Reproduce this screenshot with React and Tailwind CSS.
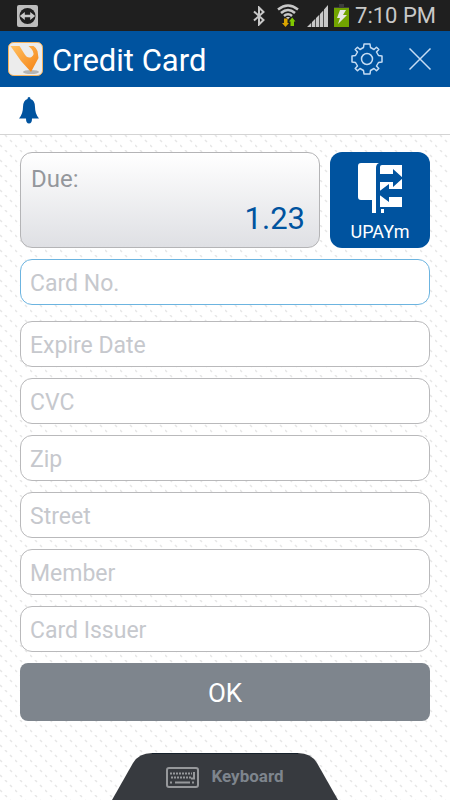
import React, { useState } from 'react';

const fields = [
  { id: 'cardNo', label: 'Card No.' },
  { id: 'expireDate', label: 'Expire Date' },
  { id: 'cvc', label: 'CVC' },
  { id: 'zip', label: 'Zip' },
  { id: 'street', label: 'Street' },
  { id: 'member', label: 'Member' },
  { id: 'cardIssuer', label: 'Card Issuer' },
];

function StatusBar() {
  return (
    <div className="flex h-[31px] items-center bg-[#1f1f1f] pl-[17px] pr-3.5 text-[#c8c8c8]">
      <svg className="h-[22px] w-[21px]" viewBox="0 0 21 22">
        <rect width="21" height="22" rx="2" fill="#bdbdbd" />
        <circle cx="10.5" cy="11" r="8" fill="#1f1f1f" />
        <path d="M2.8 11l5-4v2.7h5.4V7l5 4-5 4v-2.7H7.8V15z" fill="#c8c8c8" />
      </svg>
      <div className="ml-auto flex items-center">
        <svg className="h-5 w-3" viewBox="0 0 12 20" fill="none" stroke="#c8c8c8" strokeWidth="2">
          <path d="M1 5.5l9.5 8.5L6 18.5v-17L10.5 6 1 14.5" />
        </svg>
        <svg className="ml-3 h-[23px] w-[22px]" viewBox="0 0 22 23" fill="none">
          <g stroke="#c8c8c8" strokeWidth="2.5">
            <path d="M1 5.5Q11-2.5 21 5.5" />
            <path d="M4 9Q11 3 18 9" />
            <path d="M7 12Q11 8.500 15 12" />
          </g>
          <path d="M9 13h4l-2 2.500z" fill="#c8c8c8" />
          <path d="M7 14.500h3.500V19H12l-3.500 4L5 19h2z" fill="#d9a400" />
          <path d="M13.500 22H17v-4.500h1.500L15.200 13.500 12 17.500h1.500z" fill="#80c800" />
        </svg>
        <svg className="ml-2 h-[22px] w-[21px]" viewBox="0 0 21 22" fill="#c8c8c8">
          <path d="M0 22l4.300-4.300V22zM5 17l3.300-3.300V22H5zM9 13l3.300-3.300V22H9zM13 9l3.300-3.500V22H13zM17 4.500L21 0v22h-4z" />
        </svg>
        <svg className="ml-1.5 h-[23px] w-[15px]" viewBox="0 0 15 23">
          <path d="M5 0h5v3h5v3H0V3h5z" fill="#3c3c3c" />
          <path d="M0 4h15v19H0z" fill="#72a400" />
          <path d="M6 6h6l-3 5h4L4 20l2-6H3z" fill="#e6e6e6" />
        </svg>
        <span className="ml-1.5 text-[22px] leading-[31px]">7:10 PM</span>
      </div>
    </div>
  );
}

function AppLogo() {
  return (
    <svg className="h-[34px] w-[35px]" viewBox="0 0 35 34">
      <defs>
        <linearGradient id="logo" x1="0" y1="0" x2="1" y2="1">
          <stop offset="0" stopColor="#ffc061" />
          <stop offset="1" stopColor="#f58213" />
        </linearGradient>
      </defs>
      <rect x="0.5" y="0.5" width="34" height="33" rx="5" fill="#ececec" stroke="#f5b25c" />
      <ellipse cx="23" cy="30" rx="8" ry="2" fill="#b4b4b4" />
      <path d="M2.500 4h9l5 8q3 5 7 3 4-3 0-8l-3-3h5q3 2 4 5l1 7L23 30 13 19z" fill="url(#logo)" />
    </svg>
  );
}

function GearIcon() {
  return (
    <svg
      className="size-8"
      viewBox="0 0 32 32"
      fill="none"
      stroke="#c5dcf3"
      strokeWidth="1.5"
      strokeLinejoin="round"
    >
      <path d="M13 1H19L19.5 4.5 23 6.500 25.500 4.200 27.800 6.500 25.500 9 27.500 12.500 31 13V19L27.500 19.500 25.500 23 27.800 25.500 25.500 27.800 23 25.500 19.500 27.500 19 31H13L12.500 27.500 9 25.500 6.500 27.800 4.200 25.500 6.500 23 4.500 19.500 1 19V13L4.500 12.500 6.500 9 4.200 6.500 6.500 4.200 9 6.500 12.500 4.500Z" />
      <circle cx="16" cy="16" r="5.5" />
    </svg>
  );
}

function Header() {
  return (
    <header className="flex h-14 items-center bg-[#00539f] pl-2 pr-[18px] text-white">
      <AppLogo />
      <h1 className="ml-[9px] pt-1 text-[31px] leading-10">Credit Card</h1>
      <button type="button" aria-label="Settings" className="ml-auto">
        <GearIcon />
      </button>
      <button type="button" aria-label="Close" className="ml-[25px]">
        <svg className="size-6" viewBox="0 0 24 24" stroke="#c5dcf3" strokeWidth="1.5">
          <path d="M1.5 1.5l21 21M22.5 1.5l-21 21" />
        </svg>
      </button>
    </header>
  );
}

function UpayIcon() {
  return (
    <svg className="h-[51px] w-[45px] shrink-0" viewBox="0 0 45 51" fill="#fff">
      <path d="M3 0h18q-3 1-3 5v32H3q-3 0-3-3V3q0-3 3-3z" />
      <path d="M24 2h20v42H22V4q0-2 2-2z" />
      <path d="M14 37h4v13h-4zM23 46h3v4h-3z" />
      <path d="M20 11h15V6l10 9-10 9v-5H20zM19 30l12-9v5h14v8H31v5z" fill="#00539f" />
    </svg>
  );
}

function Background() {
  return (
    <svg className="absolute inset-0 h-full w-full" aria-hidden="true">
      <defs>
        <pattern id="dots" width="15" height="15" patternUnits="userSpaceOnUse">
          <path d="M5 0l2 2M10 5l2 2M0 10l2 2" stroke="#e6e6e6" strokeWidth="1.5" />
        </pattern>
      </defs>
      <rect width="100%" height="100%" fill="url(#dots)" />
    </svg>
  );
}

function App() {
  const [values, setValues] = useState({});

  return (
    <div className="flex min-h-screen flex-col bg-white font-['Roboto',sans-serif]">
      <StatusBar />
      <Header />
      <div className="flex h-12 items-center border-b border-[#d4d4d4] bg-white pl-[19px]">
        <button type="button" aria-label="Notifications">
          <svg className="h-[27px] w-5" viewBox="0 0 20 27" fill="#00539f">
            <path d="M10 0q1.500 0 1.500 2Q16 3.500 16 10q0 7 4 11.500H13q0 5-3 5t-3-5H0Q4 17 4 10q0-6.500 4.500-8 0-2 1.500-2z" />
          </svg>
        </button>
      </div>

      <main className="relative flex flex-1 flex-col">
        <Background />
        <form
          className="relative flex flex-col px-5 pt-[17px]"
          onSubmit={(e) => e.preventDefault()}
        >
          <div className="flex h-24 gap-2.5">
            <div className="flex flex-1 flex-col justify-between rounded-xl border border-[#b4b4b6] bg-linear-to-b from-white to-[#dfe0e4] px-2.5 py-2.5">
              <span className="text-2xl leading-8 text-[#94979c]">Due:</span>
              <span className="pr-1 text-right text-[31px] leading-9 text-[#00539f]">1.23</span>
            </div>
            <button
              type="button"
              className="flex w-[100px] flex-col items-center gap-0.5 rounded-xl bg-[#00539f] pt-[11px] text-lg leading-8 text-white"
            >
              <UpayIcon />
              UPAYm
            </button>
          </div>

          <div className="mt-[11px] flex flex-col gap-[11px]">
            {fields.map((field) => (
              <input
                key={field.id}
                id={field.id}
                aria-label={field.label}
                placeholder={field.label}
                value={values[field.id] || ''}
                onChange={(e) => setValues({ ...values, [field.id]: e.target.value })}
                className="h-[46px] w-full rounded-xl border border-[#b9b9bb] bg-white px-[9px] pt-0.5 text-[23px] text-[#55585d] outline-none first:mb-[5px] first:border-[#6cb4e0] placeholder:text-[#c6c8cd]"
              />
            ))}
          </div>

          <button
            type="submit"
            className="mt-[11px] h-[58px] rounded-lg bg-[#7e858d] pt-0.5 text-[26px] text-white"
          >
            OK
          </button>
        </form>

        <button
          type="button"
          className="relative mx-auto mt-auto grid h-12 w-[226px] items-center text-[#7e858d]"
        >
          <svg className="col-start-1 row-start-1 h-12 w-full" viewBox="0 0 226 48">
            <path d="M0 48L21 11Q27 1 40 1h146q13 0 19 10l21 37z" fill="#373a3f" />
            <path d="M40 1.5h146" stroke="#15202a" />
          </svg>
          <span className="col-start-1 row-start-1 flex items-center justify-center gap-3 pt-0.5 text-[17px] font-bold">
            <svg className="h-[21px] w-[33px]" viewBox="0 0 33 21" fill="none" stroke="#96989b">
              <rect x="1" y="1" width="31" height="19" rx="2" strokeWidth="2" />
              <path d="M4 6.500h22M5 10.500h21M4 15.500h3M26 15.500h3" strokeWidth="2" strokeDasharray="2 1" />
              <path d="M9 15.500h15M28 5v6.500h-3" strokeWidth="2" />
            </svg>
            Keyboard
          </span>
        </button>
      </main>
    </div>
  );
}

export default App;
